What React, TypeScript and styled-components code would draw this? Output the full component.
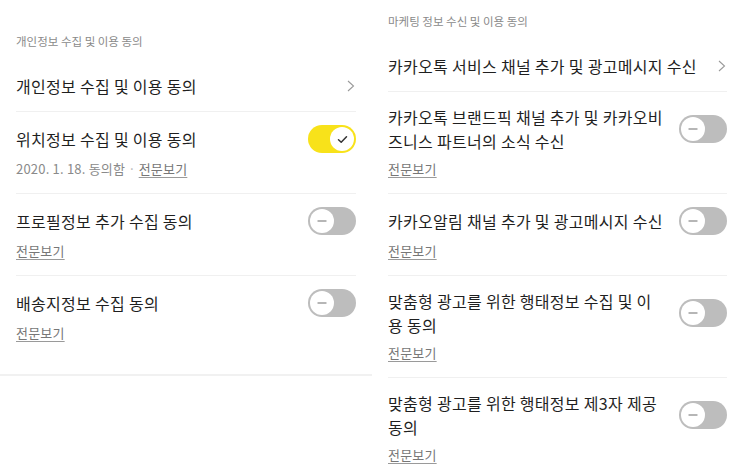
import styled, { createGlobalStyle } from 'styled-components'

const GlobalStyle = createGlobalStyle`
  html, body {
    margin: 0;
    padding: 0;
    background: #ffffff;
    overflow: hidden;
  }
  body {
    font-family: 'Noto Sans CJK KR', 'Noto Sans', sans-serif;
    color: #222222;
  }
`

const Page = styled.div`
  display: grid;
  grid-template-columns: 372px 371px;
  width: 743px;
  height: 473px;
  overflow: hidden;
  background: #ffffff;
`

const Panel = styled.div`
  display: flex;
  flex-direction: column;
  min-width: 0;
`

const Section = styled.section<{ $closed?: boolean }>`
  padding: 0 16px ${(p) => (p.$closed ? '17px' : '0')};
  border-bottom: ${(p) => (p.$closed ? '2px solid #f1f1f1' : 'none')};
`

const SectionTitle = styled.div<{ $top: number }>`
  padding-top: ${(p) => p.$top}px;
  padding-bottom: 12px;
  font-size: 11.5px;
  line-height: 16px;
  color: #8a8a8a;
`

const Row = styled.div<{ $compact?: boolean }>`
  padding: 13px 0 ${(p) => (p.$compact ? '13px' : '15px')};
  & + & {
    border-top: 1px solid #f0f0f0;
  }
`

const RowMain = styled.div`
  display: flex;
  align-items: center;
  gap: 14px;
`

const Title = styled.div`
  flex: 1;
  min-width: 0;
  font-size: 16px;
  letter-spacing: 0.3px;
  line-height: 24px;
  color: #1f1f1f;
  word-break: break-all;
`

const Sub = styled.div`
  margin-top: 7px;
  font-size: 13px;
  letter-spacing: 0.2px;
  line-height: 18px;
  color: #8a8a8a;
`

const Dot = styled.span`
  color: #b5b5b5;
  margin: 0 3px;
`

const FullLink = styled.span`
  color: #777777;
  text-decoration: underline;
  text-underline-offset: 3px;
  text-decoration-color: #9a9a9a;
`

const Track = styled.div<{ $on?: boolean }>`
  flex: none;
  display: flex;
  align-items: center;
  justify-content: ${(p) => (p.$on ? 'flex-end' : 'flex-start')};
  width: 48px;
  height: 28px;
  padding: 2px;
  box-sizing: border-box;
  border-radius: 14px;
  background: ${(p) => (p.$on ? '#f8e21a' : '#bdbdbd')};
`

const Knob = styled.div`
  display: flex;
  align-items: center;
  justify-content: center;
  width: 24px;
  height: 24px;
  border-radius: 50%;
  background: #ffffff;
`

const Chevron = styled.svg`
  flex: none;
  width: 9px;
  height: 12px;
  margin-right: 1px;
`

type Item = {
  title: string
  toggle?: boolean
  on?: boolean
  sub?: React.ReactNode
}

const Toggle = ({ on }: { on?: boolean }) => (
  <Track $on={on}>
    <Knob>
      {on ? (
        <svg width="11" height="9" viewBox="0 0 11 9">
          <polyline
            points="1.5,4.8 4.2,7.3 9.5,1.8"
            fill="none"
            stroke="#333"
            strokeWidth="1.5"
            strokeLinecap="round"
            strokeLinejoin="round"
          />
        </svg>
      ) : (
        <svg width="10" height="2" viewBox="0 0 10 2">
          <line x1="1" y1="1" x2="9" y2="1" stroke="#9e9e9e" strokeWidth="1.4" strokeLinecap="round" />
        </svg>
      )}
    </Knob>
  </Track>
)

const ChevronIcon = () => (
  <Chevron viewBox="0 0 9 12">
    <polyline points="2,1 7.5,6 2,11" fill="none" stroke="#9a9a9a" strokeWidth="1.1" />
  </Chevron>
)

const SettingRow = ({ title, toggle, on, sub }: Item) => (
  <Row $compact={!sub}>
    <RowMain>
      <Title>{title}</Title>
      {toggle ? <Toggle on={on} /> : <ChevronIcon />}
    </RowMain>
    {sub ? <Sub>{sub}</Sub> : null}
  </Row>
)

const fullView = <FullLink>전문보기</FullLink>

const privacyItems: Item[] = [
  { title: '개인정보 수집 및 이용 동의' },
  {
    title: '위치정보 수집 및 이용 동의',
    toggle: true,
    on: true,
    sub: (
      <>
        2020. 1. 18. 동의함<Dot>·</Dot>
        {fullView}
      </>
    )
  },
  { title: '프로필정보 추가 수집 동의', toggle: true, sub: fullView },
  { title: '배송지정보 수집 동의', toggle: true, sub: fullView }
]

const marketingItems: Item[] = [
  { title: '카카오톡 서비스 채널 추가 및 광고메시지 수신' },
  { title: '카카오톡 브랜드픽 채널 추가 및 카카오비즈니스 파트너의 소식 수신', toggle: true, sub: fullView },
  { title: '카카오알림 채널 추가 및 광고메시지 수신', toggle: true, sub: fullView },
  { title: '맞춤형 광고를 위한 행태정보 수집 및 이용 동의', toggle: true, sub: fullView },
  { title: '맞춤형 광고를 위한 행태정보 제3자 제공 동의', toggle: true, sub: fullView }
]

const App = () => {
  return (
    <>
      <GlobalStyle />
      <Page>
        <Panel>
          <Section $closed>
            <SectionTitle $top={33}>개인정보 수집 및 이용 동의</SectionTitle>
            {privacyItems.map((item) => (
              <SettingRow key={item.title} {...item} />
            ))}
          </Section>
        </Panel>
        <Panel>
          <Section>
            <SectionTitle $top={13}>마케팅 정보 수신 및 이용 동의</SectionTitle>
            {marketingItems.map((item) => (
              <SettingRow key={item.title} {...item} />
            ))}
          </Section>
        </Panel>
      </Page>
    </>
  )
}

export default App
